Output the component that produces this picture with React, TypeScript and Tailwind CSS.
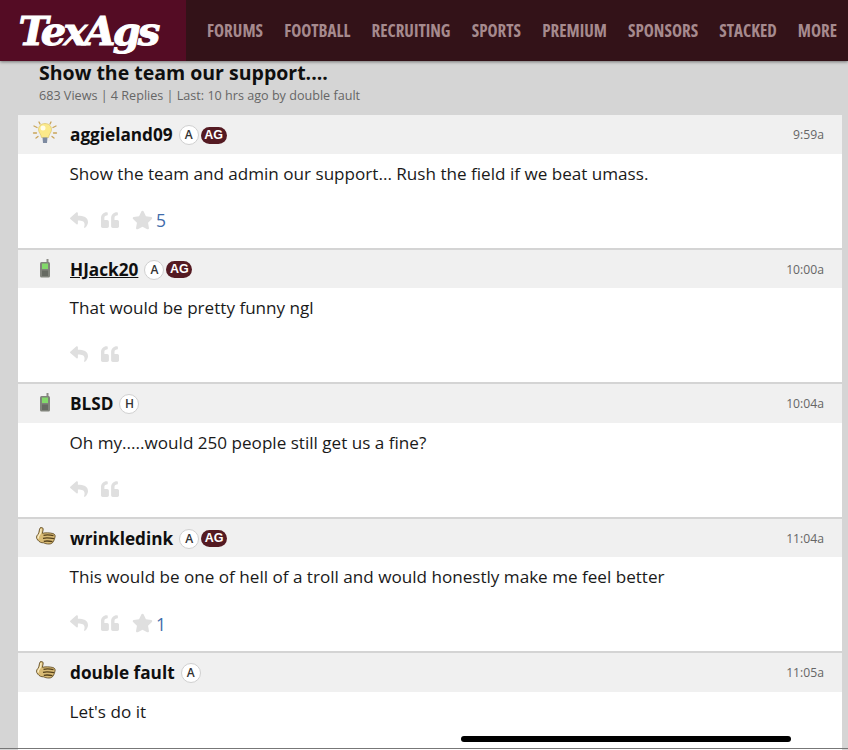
import { FaReply, FaQuoteLeft, FaStar } from "react-icons/fa";

function Bulb() {
  return (
    <svg width="26" height="24" viewBox="0 0 26 24">
      <g stroke="#c9a458" strokeWidth="1.3" strokeLinecap="round">
        <path d="M2 5l3 1.500M24 5l-3 1.500M1.500 12h3M24.500 12h-3M7 1l1 2M19 1l-1 2M4 17l2-1.500M22 17l-2-1.500" />
      </g>
      <path d="M13 2.500c-4 0-6.500 2.800-6.500 6 0 3 2.500 4.500 3 8h7c.5-3.500 3-5 3-8 0-3.200-2.500-6-6.500-6z" fill="#fbe98a" stroke="#d9c060" strokeWidth=".6" />
      <path d="M10.500 16.500h5l-.5 5.500h-4z" fill="#7d8aa0" />
      <ellipse cx="11" cy="7" rx="2.500" ry="2.500" fill="#fffde8" />
    </svg>
  );
}

function Phone() {
  return (
    <svg width="14" height="20" viewBox="0 0 14 20" className="translate-y-[1px]">
      <rect x="8.500" y="0" width="2" height="4" fill="#8a8a84" />
      <rect x="2" y="3" width="10" height="15.500" rx="1.500" fill="#80837b" />
      <rect x="4" y="4.500" width="6" height="5.500" fill="#82d96a" />
      <rect x="4" y="11.500" width="6" height="5.500" fill="#666a62" />
    </svg>
  );
}

function Thumb() {
  return (
    <svg width="21" height="20" viewBox="0 0 21 20">
      <path d="M5.500.5c2-.5 3 .8 2.600 2.600L7.300 6.300c3.200-.7 7.500-.6 10.500.2 2 .5 2.700 2 2.200 3.500-.3 1.800-.9 3.400-1.700 4.700-.9 1.500-2.300 2.300-4.300 2.300-2.500 0-4-.5-5.500-1.200-2 .1-4.200-.6-5.800-2.800C1 11 1.200 9 2.900 7.500 4.600 5.800 3.700 2.300 5.500.5z" fill="#d9bb75" stroke="#54401b" strokeWidth=".8" />
      <path d="M6 2c.2 2.200-.5 4.500-1.800 6-1 1.100-1.400 2.300-.8 3.600" fill="none" stroke="#f7ebc4" strokeWidth="1.500" />
      <path d="M8.500 8.300c3-.7 6.300-.6 10 .4M8 11.300c3-.6 6.300-.5 11 .4M8.800 14.300c2.800-.5 5.300-.4 8.700.4" stroke="#54401b" strokeWidth="1.300" fill="none" />
    </svg>
  );
}

type Post = {
  user: string;
  icon: "bulb" | "phone" | "thumb";
  badge: string;
  ag?: boolean;
  underline?: boolean;
  time: string;
  text: string;
  stars?: number;
};

const posts: Post[] = [
  { user: "aggieland09", icon: "bulb", badge: "A", ag: true, time: "9:59a", text: "Show the team and admin our support... Rush the field if we beat umass.", stars: 5 },
  { user: "HJack20", icon: "phone", badge: "A", ag: true, underline: true, time: "10:00a", text: "That would be pretty funny ngl" },
  { user: "BLSD", icon: "phone", badge: "H", time: "10:04a", text: "Oh my.....would 250 people still get us a fine?" },
  { user: "wrinkledink", icon: "thumb", badge: "A", ag: true, time: "11:04a", text: "This would be one of hell of a troll and would honestly make me feel better", stars: 1 },
  { user: "double fault", icon: "thumb", badge: "A", time: "11:05a", text: "Let's do it" },
];

const nav = ["FORUMS", "FOOTBALL", "RECRUITING", "SPORTS", "PREMIUM", "SPONSORS", "STACKED", "MORE"];

function PostRow({ p }: { p: Post }) {
  return (
    <div className="h-[134.500px] border-b-2 border-[#d4d4d4] bg-white">
      <div className="flex h-[38.500px] items-center bg-[#f0f0f0] pr-[18px]">
        <div className="flex w-[52px] shrink-0 justify-center pb-[2px] pl-[2px]">
          {p.icon === "bulb" ? <Bulb /> : p.icon === "phone" ? <Phone /> : <Thumb />}
        </div>
        <div className="flex items-center pt-[2px]">
          <span className={`text-[17.200px] font-bold text-[#0f0f0f] ${p.underline ? "underline" : ""}`}>{p.user}</span>
          <span className="ml-[6px] flex h-[20px] w-[20px] items-center justify-center rounded-full border border-[#d0d0d0] bg-white text-[12px] font-semibold text-[#333]">{p.badge}</span>
          {p.ag && (
            <span className="ml-[2px] flex h-[17px] w-[26px] items-center justify-center rounded-full bg-[#541a22] font-['Liberation_Sans',sans-serif] text-[12.500px] font-bold text-white">AG</span>
          )}
        </div>
        <span className="ml-auto pt-[2px] text-[12.200px] text-[#666]">{p.time}</span>
      </div>
      <div className="pl-[51.500px] pt-[7px] text-[17.100px] leading-[26px] text-[#1a1a1a]">{p.text}</div>
      <div className="mt-[21px] flex h-[24px] items-center pl-[52px] text-[#dfdfdf]">
        <FaReply className="h-[18px] w-[18px]" />
        <FaQuoteLeft className="ml-[13px] h-[18px] w-[18px]" />
        {p.stars !== undefined && (
          <>
            <FaStar className="ml-[13px] h-[20px] w-[21px]" />
            <span className="ml-[3px] pt-[2px] text-[17.500px] text-[#3f6cab]">{p.stars}</span>
          </>
        )}
      </div>
    </div>
  );
}

export default function App() {
  return (
    <div className="relative h-[750px] w-[848px] overflow-hidden bg-[#d5d5d5] font-['Open_Sans',sans-serif]">
      <header className="relative z-10 flex h-[61px] bg-[#331218] shadow-[0_1px_3px_rgba(0,0,0,0.45)]">
        <div className="flex w-[186px] shrink-0 items-center justify-center bg-[#540c24] pr-[10px]">
          <span className="font-['DejaVu_Serif',serif] text-[40px] font-bold italic leading-none tracking-[-2.800px] text-white [-webkit-text-stroke:1px_white]">TexAgs</span>
        </div>
        <nav className="flex flex-1 items-center justify-between pl-[21px] pr-[11px]">
          {nav.map((n) => (
            <span key={n} className="text-[17px] font-bold text-[#a68a8e] [font-stretch:75%]">{n}</span>
          ))}
        </nav>
      </header>
      <div className="ml-[18px] mr-[6px]">
        <div className="h-[54px] pl-[21px]">
          <div className="text-[19.500px] font-bold leading-[24px] text-[#0f0f0f]">Show the team our support....</div>
          <div className="pt-[1px] text-[12.600px] leading-[19px] text-[#666]">683 Views | 4 Replies | Last: 10 hrs ago by double fault</div>
        </div>
        {posts.map((p) => (
          <PostRow key={p.user} p={p} />
        ))}
      </div>
      <div className="absolute left-[461px] top-[736px] h-[6px] w-[330px] rounded-full bg-black" />
      <div className="absolute bottom-[1px] left-0 h-[1px] w-full bg-[#777]" />
    </div>
  );
}
